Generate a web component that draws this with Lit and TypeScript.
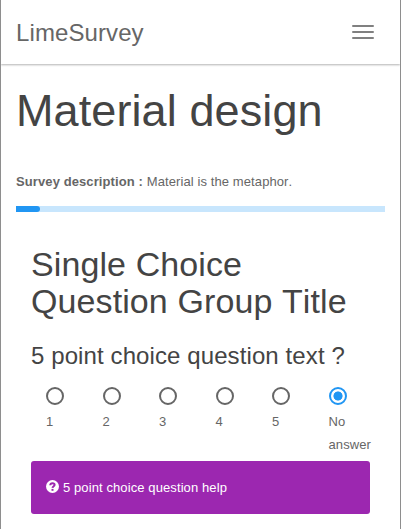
import { LitElement, html, css } from "lit";
import { customElement, property, state } from "lit/decorators.js";
import { classMap } from "lit/directives/class-map.js";

@customElement("survey-navbar")
class SurveyNavbar extends LitElement {
  static styles = css`
    :host {
      display: flex;
      position: relative;
      align-items: center;
      justify-content: space-between;
      box-sizing: border-box;
      height: 64px;
      padding: 0 26px 0 15px;
      background: #fff;
      box-shadow: 0 1px 2px rgba(0, 0, 0, 0.3);
    }
    .brand {
      font-size: 24px;
      line-height: 24px;
      color: #666;
      padding-top: 1px;
    }
    .toggle {
      display: grid;
      gap: 4px;
      padding: 0;
      border: 0;
      background: none;
    }
    .bar {
      width: 22px;
      height: 2px;
      border-radius: 1px;
      background: #808080;
    }
  `;
  render() {
    return html`
      <div class="brand">LimeSurvey</div>
      <button class="toggle" aria-label="Toggle navigation">
        <span class="bar"></span><span class="bar"></span><span class="bar"></span>
      </button>
    `;
  }
}

@customElement("survey-progress")
class SurveyProgress extends LitElement {
  @property({ type: Number }) value = 0;
  static styles = css`
    :host {
      display: block;
      height: 6px;
      background: #c8e6fd;
    }
    .fill {
      height: 6px;
      border-radius: 0 3px 3px 0;
      background: #2196f3;
    }
  `;
  render() {
    return html`<div class="fill" style="width:${this.value}%"></div>`;
  }
}

@customElement("app-root")
class AppRoot extends LitElement {
  @state() private selected = "No answer";
  private choices = ["1", "2", "3", "4", "5", "No answer"];

  static styles = css`
    :host {
      display: block;
      box-sizing: border-box;
      height: 529px;
      overflow: hidden;
      border: solid #8e8e8e;
      border-width: 0 1px;
      background: #fff;
      color: #666;
      font: 13px/23px "Liberation Sans", Arial, sans-serif;
      font-kerning: none;
      letter-spacing: 0.1px;
    }
    h1,
    h2,
    h3,
    p {
      margin: 0;
      font-weight: 400;
    }
    h1,
    h2,
    h3 {
      color: #444;
    }
    .page {
      padding: 0 15px;
    }
    h1 {
      padding-top: 22px;
      font-size: 45px;
      line-height: 49px;
    }
    .description {
      padding: 35px 0 13px;
    }
    .group {
      padding: 34px 15px 0;
    }
    h2 {
      font-size: 34px;
      line-height: 37px;
    }
    h3 {
      padding-top: 23px;
      font-size: 24px;
      line-height: 26px;
    }
    .choices {
      display: grid;
      grid-template-columns: repeat(6, 1fr);
      padding-top: 18px;
    }
    .choice {
      display: block;
      min-width: 0;
      padding-left: 15px;
    }
    .radio {
      display: block;
      box-sizing: border-box;
      width: 18px;
      height: 18px;
      margin-bottom: 5px;
      border: 2px solid #666;
      border-radius: 50%;
    }
    .radio.checked {
      border-color: #2196f3;
      background: radial-gradient(circle, #2196f3 4.2px, transparent 4.9px);
    }
    .help {
      display: flex;
      align-items: center;
      gap: 4px;
      box-sizing: border-box;
      height: 53px;
      margin-top: 5px;
      padding: 0 15px;
      border-radius: 3px;
      background: #9c27b0;
      color: #fff;
    }
    .help svg {
      display: block;
      margin-top: -2px;
    }
  `;

  render() {
    return html`
      <survey-navbar></survey-navbar>
      <main class="page">
        <h1>Material design</h1>
        <p class="description"><b>Survey description :</b> Material is the metaphor.</p>
        <survey-progress .value=${6.6}></survey-progress>
        <section class="group">
          <h2>Single Choice Question Group Title</h2>
          <h3>5 point choice question text ?</h3>
          <div class="choices" role="radiogroup">
            ${this.choices.map(
              (c) => html`<div
                class="choice"
                role="radio"
                aria-checked=${c === this.selected}
                @click=${() => (this.selected = c)}
              >
                <span class=${classMap({ radio: true, checked: c === this.selected })}></span>
                ${c}
              </div>`
            )}
          </div>
          <div class="help">
            <svg width="13" height="13" viewBox="0 0 13 13" aria-hidden="true">
              <circle cx="6.5" cy="6.5" r="6.5" fill="#fff" />
              <path
                d="M4.2 5.2C4.3 3.8 5.2 3.2 6.5 3.2C7.9 3.2 8.6 3.8 8.6 4.8C8.6 6.2 6.6 6.2 6.5 7.9"
                fill="none"
                stroke="#9c27b0"
                stroke-width="2"
              />
              <rect x="5.5" y="8.9" width="2" height="1.9" fill="#9c27b0" />
            </svg>
            <span>5 point choice question help</span>
          </div>
        </section>
      </main>
    `;
  }
}
